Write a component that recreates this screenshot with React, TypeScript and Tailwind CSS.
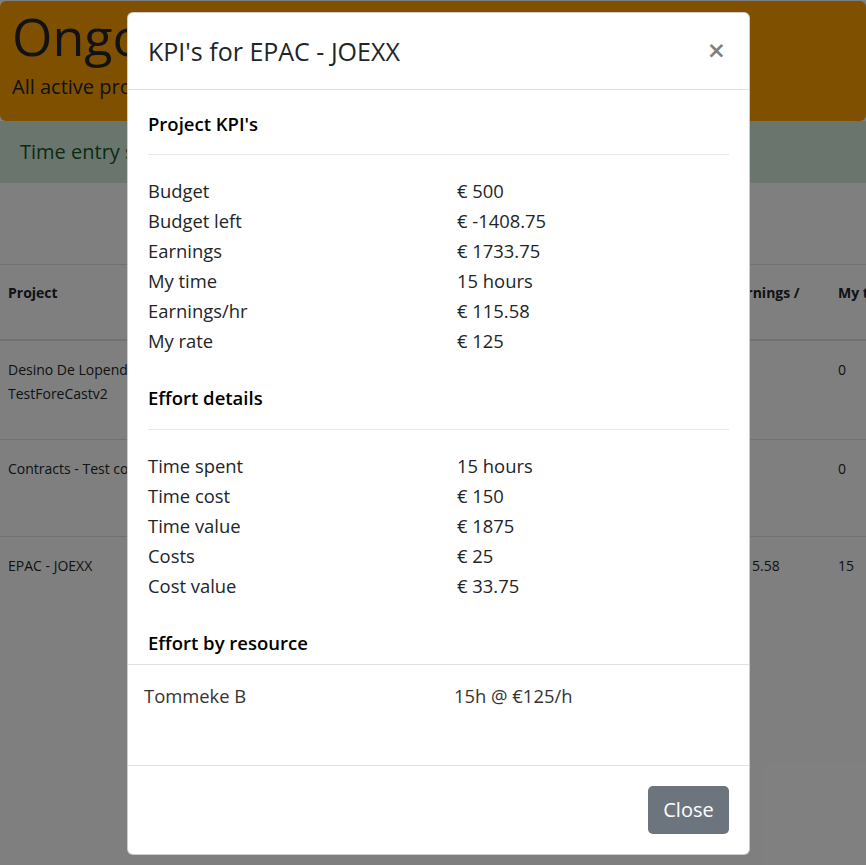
import React from 'react';

const projectKpis = [
  { label: 'Budget', value: '€ 500' },
  { label: 'Budget left', value: '€ -1408.75' },
  { label: 'Earnings', value: '€ 1733.75' },
  { label: 'My time', value: '15 hours' },
  { label: 'Earnings/hr', value: '€ 115.58' },
  { label: 'My rate', value: '€ 125' },
];

const effortDetails = [
  { label: 'Time spent', value: '15 hours' },
  { label: 'Time cost', value: '€ 150' },
  { label: 'Time value', value: '€ 1875' },
  { label: 'Costs', value: '€ 25' },
  { label: 'Cost value', value: '€ 33.75' },
];

const rows = [
  { name: ['Desino De Lopende', 'TestForeCastv2'], perHour: '', myTime: '0', h: 'h-[99px] border-b border-[#dee2e6]' },
  { name: ['Contracts - Test contract'], perHour: '', myTime: '0', h: 'h-[97px] border-b border-[#dee2e6]' },
  { name: ['EPAC - JOEXX'], perHour: '115.58', myTime: '15', h: 'h-[140px]' },
];

const KpiList = ({ items }: { items: { label: string; value: string }[] }) => (
  <div className="grid grid-cols-[309px_1fr] text-[18.4px] leading-[30px]">
    {items.map((item) => (
      <React.Fragment key={item.label}>
        <div>{item.label}</div>
        <div>{item.value}</div>
      </React.Fragment>
    ))}
  </div>
);

const App: React.FC = () => {
  return (
    <div className="relative min-h-[865px] w-full overflow-hidden bg-white text-[#212529] font-['Segoe_UI','Open_Sans',sans-serif]">
      {/* Page behind the modal */}
      <div className="mt-px h-[120px] rounded-md bg-[#ffa000] px-3 pt-[4px]">
        <h1 className="text-[52px] leading-[62px] font-medium">Ongoing projects</h1>
        <p className="mt-[6px] text-[20px] leading-[28px]">All active projects and their KPI's</p>
      </div>
      <div className="bg-[#d4edda] px-5 py-[17px] text-[20px] leading-[28px] text-[#155724]">
        Time entry saved successfully
      </div>

      <div className="mt-[81px]">
        <div className="grid h-[77px] grid-cols-[722px_108px_1fr] border-t border-b-2 border-[#dee2e6] text-[14px] leading-[24px] font-bold">
          <div className="px-2 pt-[16px]">Project</div>
          <div className="px-2 pt-[16px] whitespace-nowrap">Earnings /</div>
          <div className="px-2 pt-[16px] whitespace-nowrap">My time</div>
        </div>
        {rows.map((row, i) => (
          <div key={i} className={`grid grid-cols-[722px_108px_1fr] text-[14px] leading-[24px] ${row.h}`}>
            <div className="px-2 pt-[17px]">
              {row.name.map((n) => (
                <div key={n} className="whitespace-nowrap">{n}</div>
              ))}
            </div>
            <div className="px-2 pt-[17px] pl-[14px] whitespace-nowrap">{row.perHour}</div>
            <div className="px-2 pt-[17px]">{row.myTime}</div>
          </div>
        ))}
      </div>

      {/* Backdrop */}
      <div className="absolute inset-0 bg-black/50" />

      {/* Modal */}
      <div className="absolute left-[127px] top-[12px] flex h-[843px] w-[623px] flex-col rounded-[6px] border border-black/20 bg-white">
        <div className="flex items-center justify-between border-b border-[#dee2e6] px-5 py-5">
          <h4 className="text-[25px] leading-[36px]">KPI's for EPAC - JOEXX</h4>
          <span className="mr-[3px] mt-[-2px] text-[23px] leading-none font-bold text-black/50 font-['DejaVu_Sans',sans-serif]">×</span>
        </div>

        <div className="px-5 pt-[22px]">
          <h5 className="text-[18.5px] leading-[24px] font-semibold text-black">Project KPI's</h5>
          <hr className="mt-[18px] mb-[21px] border-[#e5e5e5]" />
          <KpiList items={projectKpis} />

          <h5 className="mt-[30px] text-[18.5px] leading-[24px] font-semibold text-black">Effort details</h5>
          <hr className="mt-[19px] mb-[21px] border-[#e5e5e5]" />
          <KpiList items={effortDetails} />

          <h5 className="mt-[30px] mb-[9px] text-[18.5px] leading-[24px] font-semibold text-black">Effort by resource</h5>
        </div>

        <div className="h-[101px] border-t border-[#dee2e6] px-4 pt-[16px]">
          <div className="grid grid-cols-[310px_1fr] text-[18.4px] leading-[30px] text-[#333]">
            <div>Tommeke B</div>
            <div>15h @ €125/h</div>
          </div>
        </div>

        <div className="flex justify-end border-t border-[#dee2e6] p-5">
          <button className="h-[48px] w-[81px] rounded-[5px] bg-[#6c757d] text-[20px] text-white">Close</button>
        </div>
      </div>
    </div>
  );
};

export default App;
